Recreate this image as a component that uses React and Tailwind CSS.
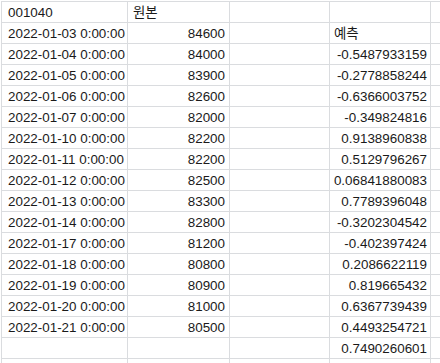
import React from 'react'

// 예측 sheet rows: [date, 원본, 예측]
const rows = [
  ['2022-01-03 0:00:00', '84600', ''],
  ['2022-01-04 0:00:00', '84000', '-0.5487933159'],
  ['2022-01-05 0:00:00', '83900', '-0.2778858244'],
  ['2022-01-06 0:00:00', '82600', '-0.6366003752'],
  ['2022-01-07 0:00:00', '82000', '-0.349824816'],
  ['2022-01-10 0:00:00', '82200', '0.9138960838'],
  ['2022-01-11 0:00:00', '82200', '0.5129796267'],
  ['2022-01-12 0:00:00', '82500', '0.06841880083'],
  ['2022-01-13 0:00:00', '83300', '0.7789396048'],
  ['2022-01-14 0:00:00', '82800', '-0.3202304542'],
  ['2022-01-17 0:00:00', '81200', '-0.402397424'],
  ['2022-01-18 0:00:00', '80800', '0.2086622119'],
  ['2022-01-19 0:00:00', '80900', '0.819665432'],
  ['2022-01-20 0:00:00', '81000', '0.6367739439'],
  ['2022-01-21 0:00:00', '80500', '0.4493254721'],
  ['', '', '0.7490260601'],
  ['', '', ''],
]

const cell = 'h-[21px] border-l border-t border-[#dadcdf] flex items-end pb-[2px] overflow-visible whitespace-nowrap'

const Row = ({ a, b, c, d }) => (
  <div className="grid grid-cols-[126px_102px_100px_101px_1fr]">
    <div className={`${cell} pl-[6px]`}>{a}</div>
    <div className={`${cell} ${b.align === 'right' ? 'justify-end pr-[4px]' : 'pl-[5px]'}`}>{b.text}</div>
    <div className={`${cell}`}></div>
    <div className={`${cell} ${d.align === 'right' ? 'justify-end pr-[3px]' : 'pl-[4px]'}`}>{d.text}</div>
    <div className={cell}></div>
  </div>
)

export default function App() {
  return (
    <div
      className="w-[440px] h-[363px] overflow-hidden bg-white pl-[1px] pt-[1px] text-[13.4px] leading-[15px] text-[#1a1a1a]"
      style={{ fontFamily: '"Liberation Sans", Arial, "Noto Sans CJK KR", sans-serif' }}
    >
      <Row a="001040" b={{ text: '원본', align: 'left' }} d={{ text: '', align: 'left' }} />
      {rows.map((r, i) => (
        <Row
          key={i}
          a={r[0]}
          b={{ text: r[1], align: 'right' }}
          d={i === 0 ? { text: '예측', align: 'left' } : { text: r[2], align: 'right' }}
        />
      ))}
    </div>
  )
}
